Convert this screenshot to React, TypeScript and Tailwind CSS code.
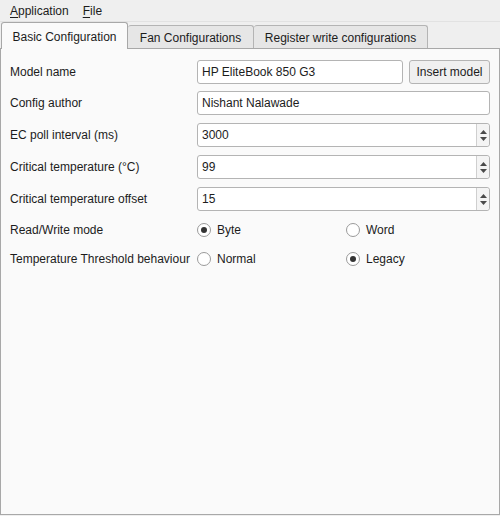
import React from "react";

const font = { fontFamily: '"Liberation Sans", Arial, sans-serif' };

function Spin({ value }: { value: string }) {
  return (
    <div className="flex h-[24px] flex-1 rounded-[3px] border border-[#b4b4b4] bg-white">
      <div className="flex flex-1 items-center pl-[4px]">{value}</div>
      <div className="flex w-[13px] flex-col items-center justify-center gap-[3px] rounded-r-[3px] border-l border-[#cfcfcf] bg-[#f4f4f4]">
        <svg width="7" height="4" viewBox="0 0 7 4">
          <path d="M3.5 0 L7 4 L0 4 Z" fill="#4a4a4a" />
        </svg>
        <svg width="7" height="4" viewBox="0 0 7 4">
          <path d="M0 0 L7 0 L3.5 4 Z" fill="#4a4a4a" />
        </svg>
      </div>
    </div>
  );
}

function Radio({ checked, label }: { checked?: boolean; label: string }) {
  return (
    <div className="flex items-center gap-[6px]">
      <div className="flex h-[14px] w-[14px] items-center justify-center rounded-full border border-[#9a9a9a] bg-white">
        {checked && <div className="h-[6px] w-[6px] rounded-full bg-[#333333]" />}
      </div>
      <span>{label}</span>
    </div>
  );
}

function Row({ label, children, h = "h-[24px]" }: { label: string; children: React.ReactNode; h?: string }) {
  return (
    <div className={`flex items-center ${h}`}>
      <div className="w-[187px] shrink-0 whitespace-nowrap">{label}</div>
      <div className="flex flex-1 items-center">{children}</div>
    </div>
  );
}

export default function App() {
  return (
    <div
      className="flex h-[516px] w-[500px] flex-col bg-[#efefef] text-[12px] text-[#1c1c1c]"
      style={font}
    >
      {/* Menu bar */}
      <div className="flex h-[22px] items-center gap-[14px] border-b border-[#e2e2e2] pl-[10px] pt-[1px]">
        <span>
          <span className="underline underline-offset-2">A</span>pplication
        </span>
        <span>
          <span className="underline underline-offset-2">F</span>ile
        </span>
      </div>

      {/* Tabs */}
      <div className="flex h-[26px] items-end pl-[1px]">
        <div className="relative z-10 -mb-px flex h-[27px] w-[127px] items-center justify-center rounded-t-[3px] border border-b-0 border-[#a8a8a8] bg-[#fafafa] pt-[2px]">
          Basic Configuration
        </div>
        <div className="flex h-[23px] w-[126px] items-center justify-center rounded-t-[3px] border border-b-0 border-l-0 border-[#b4b4b4] bg-[#e6e6e6] pt-[1px]">
          Fan Configurations
        </div>
        <div className="flex h-[23px] w-[174px] items-center justify-center rounded-t-[3px] border border-b-0 border-l-0 border-[#b4b4b4] bg-[#e6e6e6] pt-[1px]">
          Register write configurations
        </div>
      </div>

      {/* Panel */}
      <div className="mb-[1px] flex flex-1 flex-col gap-[8px] border border-[#a8a8a8] bg-[#fafafa] px-[9px] pt-[11px]">
        <Row label="Model name">
          <div className="flex h-[24px] flex-1 items-center rounded-[3px] border border-[#b4b4b4] bg-white pl-[4px]">
            HP EliteBook 850 G3
          </div>
          <button className="ml-[6px] flex h-[24px] w-[81px] items-center justify-center rounded-[3px] border border-[#b4b4b4] bg-[#f0f0f0]">
            Insert model
          </button>
        </Row>
        <div className="-mt-px">
          <Row label="Config author">
            <div className="flex h-[24px] flex-1 items-center rounded-[3px] border border-[#b4b4b4] bg-white pl-[4px]">
              Nishant Nalawade
            </div>
          </Row>
        </div>
        <Row label="EC poll interval (ms)">
          <Spin value="3000" />
        </Row>
        <Row label="Critical temperature (°C)">
          <Spin value="99" />
        </Row>
        <Row label="Critical temperature offset">
          <Spin value="15" />
        </Row>
        <Row label="Read/Write mode" h="h-[22px]">
          <div className="grid flex-1 grid-cols-[149px_1fr]">
            <Radio checked label="Byte" />
            <Radio label="Word" />
          </div>
        </Row>
        <Row label="Temperature Threshold behaviour" h="h-[20px]">
          <div className="grid flex-1 grid-cols-[149px_1fr]">
            <Radio label="Normal" />
            <Radio checked label="Legacy" />
          </div>
        </Row>
      </div>
    </div>
  );
}
